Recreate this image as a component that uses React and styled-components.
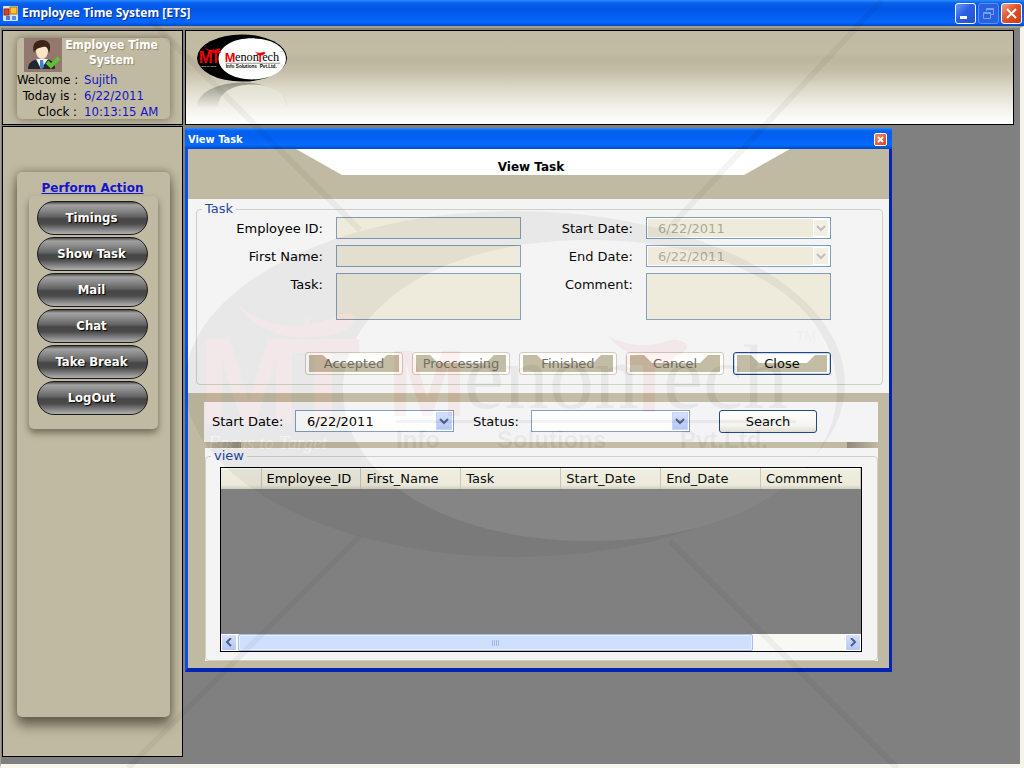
import styled, { createGlobalStyle, css } from "styled-components";

const GlobalStyle = createGlobalStyle`
  * {
    box-sizing: border-box;
  }
  body {
    margin: 0;
    font-family: "DejaVu Sans", Verdana, sans-serif;
    font-size: 13px;
    color: #000;
  }
  button, input, select, textarea {
    font-family: inherit;
    font-size: inherit;
  }
`;

const tan = "#c1baa2";
const condensed = `"DejaVu Sans Condensed", Tahoma, sans-serif`;

const Screen = styled.div`
  position: relative;
  min-height: 100vh;
  display: flex;
  flex-direction: column;
  overflow: hidden;
  background-color: #808080;
`;

/* main window title */

const TitleBar = styled.header`
  height: 26px;
  padding: 0 2px 0 3px;
  display: flex;
  align-items: center;
  gap: 4px;
  color: white;
  background: linear-gradient(#2a8cff 0, #0a62ee 3px, #0257e4 8px, #0560f4 18px, #0668fe 22px, #0148c8 100%);
`;

const AppTitle = styled.h1`
  flex: 1;
  margin: 0;
  font-family: "Noto Sans", sans-serif;
  font-size: 12px;
  font-weight: bold;
  line-height: 16px;
  text-shadow: 1px 1px #0a2f87;
`;

const WindowButtons = styled.div`
  display: flex;
  gap: 2px;
`;

const WindowButton = styled.button`
  width: 21px;
  height: 21px;
  padding: 0;
  display: flex;
  border: 1px solid ${(props) => (props.$dim ? "#5d8bf0" : "#fff")};
  border-radius: 3px;
  background: ${(props) =>
    props.$close
      ? "linear-gradient(135deg, #f3a087, #e0542c 45%, #c93b10)"
      : props.$dim
      ? "#2a61e2"
      : "linear-gradient(135deg, #6d97f6, #2a60e4 45%, #2350cf)"};
`;

const Client = styled.main`
  flex: 1;
  display: grid;
  grid-template-columns: 181px 1fr;
  gap: 2px;
  padding: 2px 0 7px 1px;
  border-style: solid;
  border-width: 2px 4px 4px 1px;
  border-color: #a79f86 #f6f4ea #f8f6ee #a79f86;
`;

const Column = styled.div`
  display: flex;
  flex-direction: column;
  gap: 1px;
`;

const Panel = styled.section`
  min-height: 95px;
  border: 1px solid #000;
  background-color: ${tan};
`;

const raised = css`
  border-radius: 5px;
  background-color: ${tan};
  box-shadow: 0 0 9px rgba(60, 55, 40, 0.6);
`;

/* user card */

const UserPanel = styled(Panel)`
  padding: 7px 12px 5px 14px;
`;

const UserCard = styled.div`
  ${raised}
  height: 81px;
`;

const UserTop = styled.div`
  display: flex;
  padding-left: 7px;
`;

const SystemName = styled.h2`
  flex: 1;
  margin: 0;
  padding-right: 9px;
  font-family: ${condensed};
  font-size: 12px;
  line-height: 15px;
  text-align: center;
  color: white;
  text-shadow: 1px 1px 1px #8d866e;
`;

const UserInfo = styled.dl`
  margin: 0;
  display: grid;
  grid-template-columns: 60px 1fr;
  column-gap: 7px;
  font-family: ${condensed};
  font-size: 13px;
  line-height: 16px;
  white-space: nowrap;
`;

const InfoLabel = styled.dt`
  text-align: right;
`;

const InfoValue = styled.dd`
  margin: 0;
  color: #1313c4;
`;

/* side menu */

const SidePanel = styled(Panel)`
  flex: 1;
  display: flex;
  padding: 45px 12px 39px 14px;
`;

const SideCard = styled.nav`
  ${raised}
  flex: 1;
  padding: 8px 12px;
  box-shadow: 0 0 9px rgba(60, 55, 40, 0.5), 0 9px 12px rgba(60, 55, 40, 0.6);
`;

const SideTitle = styled.a`
  display: block;
  padding-right: 2px;
  font-size: 12px;
  font-weight: bold;
  line-height: 16px;
  text-align: center;
  white-space: nowrap;
  color: #1414cc;
`;

const MenuBox = styled.div`
  ${raised}
  display: flex;
  flex-direction: column;
  gap: 2px;
  padding: 5px 10px 14px 8px;
  box-shadow: 0 4px 7px rgba(60, 55, 40, 0.6);
`;

const MenuButton = styled.button`
  height: 34px;
  padding: 0 2px 2px 0;
  border: 1px solid #1c1c1c;
  border-radius: 17px;
  font-family: ${condensed};
  font-size: 13px;
  font-weight: bold;
  color: white;
  text-shadow: 1px 1px 1px #000;
  background: linear-gradient(#4a4a4a 0, #a2a2a2 3px, #8a8a8a 8px, #606060 15px, #454545 17px, #4c4c4c 22px, #888 28px, #b0b0b0 100%);
`;

/* banner */

const Banner = styled(Panel)`
  height: 95px;
  margin-right: 6px;
  padding: 3px 11px;
  background: linear-gradient(${tan} 0, #c3bca5 22px, #bdb69d 27px, #c4bea8 40px, #dedaca 58px, #f3f2ec 78px, #fff 100%);
`;

const LogoStack = styled.div`
  width: 90px;
  display: flex;
  flex-direction: column;
`;

const Reflection = styled.div`
  height: 26px;
  overflow: hidden;
  opacity: 0.3;
  mask-image: linear-gradient(#000, transparent);

  svg {
    transform: scaleY(-1);
  }
`;

/* child window */

const ChildWindow = styled.section`
  width: 707px;
  max-width: 100%;
  margin-top: 2px;
  border-style: solid;
  border-width: 0 3px 4px;
  border-color: #0a50e6 #0424b4 #0424b4 #0a50e6;
  background-color: ${tan};
`;

const ChildTitle = styled.header`
  height: 21px;
  margin: 0 -3px;
  padding: 2px 5px 0 3px;
  display: flex;
  align-items: center;
  justify-content: space-between;
  font-family: ${condensed};
  font-size: 11px;
  font-weight: bold;
  color: white;
  background: linear-gradient(#2a8cff 0, #0560ec 3px, #0360f4 10px, #066cfe 17px, #0148c0 100%);
`;

const CloseButton = styled.button`
  width: 13px;
  height: 13px;
  padding: 0;
  display: flex;
  border: 1px solid #fff;
  border-radius: 2px;
  background: linear-gradient(135deg, #f08a6a, #d9431a);
`;

const FormBanner = styled.div`
  height: 50px;
  padding: 0 99px 0 108px;
`;

const FormTitle = styled.h2`
  height: 26px;
  margin: 0;
  padding: 10px 24px 0 0;
  font-size: 12px;
  line-height: 16px;
  text-align: center;
  background-color: #fff;
  clip-path: polygon(0 0, 100% 0, calc(100% - 46px) 100%, 46px 100%);
`;

const FormArea = styled.div`
  padding: 2px 6px 8px 8px;
  background-color: #f4f4f5;
`;

const Group = styled.fieldset`
  min-width: 0;
  margin: 0;
  padding: 0;
  border: 1px solid #d0d0c2;
  border-radius: 4px;
`;

const Legend = styled.legend`
  margin-left: 5px;
  padding: 0 3px;
  line-height: 16px;
  color: #2448a0;
`;

const Fields = styled.div`
  display: grid;
  grid-template-columns: 126px 185px 99px 185px;
  gap: 6px 13px;
`;

const FieldLabel = styled.label`
  height: 22px;
  line-height: 24px;
  text-align: right;
`;

const fieldBox = css`
  width: 100%;
  margin: 0;
  border: 1px solid #7f9db9;
  border-radius: 0;
  background-color: #efebdb;
`;

const TextInput = styled.input`
  ${fieldBox}
  height: 22px;
  padding: 0 3px;
`;

const TextArea = styled.textarea`
  ${fieldBox}
  display: block;
  height: 47px;
  padding: 3px;
  resize: none;
`;

const ComboBox = styled.div`
  position: relative;
  width: ${(props) => props.$width || "100%"};
`;

const Select = styled.select`
  ${fieldBox}
  display: block;
  height: 22px;
  padding: 0 20px 0 11px;
  appearance: none;
  outline: 0;
  color: #000;
  background-color: #fff;
  &:disabled {
    opacity: 1;
    color: #aca899;
    background-color: #efebdb;
    box-shadow: inset 0 0 0 1px #fff;
  }
`;

const ComboArrow = styled.span`
  position: absolute;
  top: 2px;
  right: 2px;
  width: 16px;
  height: 18px;
  display: flex;
  align-items: center;
  justify-content: center;
  pointer-events: none;
  border: 1px solid ${(props) => (props.$disabled ? "#fff" : "#c8d6fb")};
  color: ${(props) => (props.$disabled ? "#c3bfb4" : "#4d6185")};
  background: ${(props) => (props.$disabled ? "#f1efe6" : "linear-gradient(#d3e0fe, #b0c5f6)")};
`;

const Actions = styled.div`
  display: flex;
  justify-content: flex-end;
  gap: 9px;
  padding: 32px 51px 9px 0;
`;

const PlainButton = styled.button`
  width: 98px;
  height: 23px;
  padding: 0;
  border: 1px solid #1a4277;
  border-radius: 3px;
  color: #000;
  background: linear-gradient(#fff, #f5f4ef 70%, #dfdcd0);
`;

const TabButton = styled(PlainButton)`
  position: relative;
  z-index: 0;
  background: #fdfdfb;
  box-shadow: ${(props) => (props.disabled ? "none" : "inset 0 0 0 1px #c5d6f5")};
  &:disabled {
    color: #6c695f;
    border-color: #cfcbbc;
  }
  &::before,
  &::after {
    content: "";
    position: absolute;
    z-index: -1;
    left: 3px;
    right: 3px;
    top: 2px;
    height: 17px;
    background-color: ${tan};
  }
  &::after {
    height: 8px;
    background-color: #fff;
    clip-path: polygon(14px 0, calc(100% - 12px) 0, calc(100% - 20px) 100%, 22px 100%);
  }
`;

const SearchArea = styled.div`
  padding: 9px 11px 7px 16px;
`;

const SearchBar = styled.form`
  height: 40px;
  padding: 0 8px 2px;
  display: flex;
  align-items: center;
  background-color: #f4f4f6;
`;

const SearchLabel = styled.label`
  width: ${(props) => props.$width};
`;

const Spacer = styled.div`
  width: ${(props) => props.$width};
`;

const Divider = styled.div`
  height: 6px;
  display: flex;
  justify-content: space-between;

  &::before,
  &::after {
    content: "";
    width: 37px;
    background: linear-gradient(to right, ${tan}, #8f8a78);
  }
  &::after {
    width: 31px;
    background: linear-gradient(to left, ${tan}, #8f8a78);
  }
`;

const ViewArea = styled.div`
  margin-left: 1px;
  background-color: #f4f4f5;
`;

const DataGrid = styled.div`
  margin: 3px 15px 8px 14px;
  border: 1px solid #000;
  background-color: #808080;
`;

const Table = styled.table`
  width: 100%;
  table-layout: fixed;
  border-collapse: collapse;
`;

const HeadCell = styled.th`
  width: ${(props) => props.$width || "auto"};
  height: 21px;
  padding: 0 0 0 5px;
  font-weight: normal;
  text-align: left;
  white-space: nowrap;
  border-right: 1px solid #c9c5b2;
  background: linear-gradient(#fff 0, #efedde 2px, #ebeadb 17px, #d2cdbc 100%);
`;

const EmptyRows = styled.div`
  height: 145px;
`;

const ScrollBar = styled.div`
  height: 17px;
  display: flex;
  background-color: #f8f8f4;
`;

const ScrollButton = styled.button`
  width: 16px;
  padding: 0;
  display: flex;
  align-items: center;
  justify-content: center;
  border: 1px solid #fff;
  border-radius: 2px;
  color: #4d6185;
  background: linear-gradient(#d3e0fe, #b4c8f7);
`;

const Track = styled.div`
  flex: 1;
  padding: 0 1px;
`;

const Thumb = styled.div`
  width: 85%;
  height: 17px;
  display: flex;
  align-items: center;
  justify-content: center;
  border: 1px solid #a5bdea;
  border-radius: 2px;
  box-shadow: inset 0 0 0 1px #e6eeff;
  background-color: #cfe0fe;
`;

const Watermark = styled.svg`
  position: absolute;
  top: 0;
  left: 0;
  width: 1024px;
  height: 768px;
  pointer-events: none;
`;

const LogoSvg = styled.svg`
  display: block;
  width: 90px;
  height: 48px;
`;

const menu = ["Timings", "Show Task", "Mail", "Chat", "Take Break", "LogOut"];

const columns = ["Employee_ID", "First_Name", "Task", "Start_Date", "End_Date", "Commment"];

const Ovals = () => (
  <g>
    <ellipse cx="515" cy="384" rx="330" ry="173" fill="#000" />
    <path
      d="M343 390 C343 302 447 240 590 240 C733 240 837 302 837 390 C837 478 733 541 590 541 C447 541 343 478 343 390 Z"
      fill="#fff"
    />
  </g>
);

const LogoArt = ({ solid }) => (
  <g>
    <Ovals />
    <g fill="#f00000" fontFamily="Liberation Sans, sans-serif" fontWeight="bold">
      <text x="198" y="424" fontSize="122">M</text>
      <text x="286" y="424" fontSize="122">T</text>
      <text x="388" y="416" fontSize="94">M</text>
      <text x="624" y="412" fontSize="82">T</text>
    </g>
    <g fill="#f00000">
      <path d="M237 305 C262 324 282 327 304 325 Q306 312 311 324 C330 322 341 309 354 315 C361 322 346 333 325 336 L303 338 C278 337 253 326 237 305 Z" />
      <path d="M608 336 C630 347 645 346 661 343 C672 337 683 340 688 345 C686 355 674 357 662 358 L648 358 C630 355 617 348 608 336 Z" />
    </g>
    <g fill="#000" fontFamily="Liberation Serif, serif" fontSize="90">
      <text x="464" y="408">enon</text>
      <text x="663" y="408">ech</text>
    </g>
    <rect x="396" y="420" width="400" height="3" fill="#000" />
    <g fill="#000" fontFamily="Liberation Sans, sans-serif" fontWeight="bold" fontSize={solid ? 34 : 24}>
      <text x="396" y={solid ? 455 : 448}>Info</text>
      <text x={solid ? 470 : 497} y={solid ? 455 : 448}>Solutions</text>
      <text x={solid ? 645 : 680} y={solid ? 455 : 448}>Pvt.Ltd.</text>
    </g>
    <text x="208" y="449" fill="#fff" fontFamily="Liberation Serif, serif" fontStyle="italic" fontSize="19">Focus to Target</text>
    <text x="796" y="341" fill="#777" fontFamily="Liberation Sans, sans-serif" fontSize="14">TM</text>
  </g>
);

const AppIcon = () => (
  <svg width="15" height="15" viewBox="0 0 15 15">
    <rect width="15" height="15" rx="1" fill="#d9e4f5" />
    <rect x="1" y="3" width="5" height="6" fill="#d8432b" stroke="#8d2415" />
    <rect x="7" y="1" width="7" height="7" fill="#f7c433" stroke="#a87411" />
    <rect x="3" y="10" width="4" height="4" fill="#4c7ad0" />
    <rect x="9" y="10" width="4" height="4" fill="#5c8ee0" />
  </svg>
);

const AvatarSvg = styled.svg`
  display: block;
`;

const Avatar = () => (
  <AvatarSvg width="38" height="34" viewBox="0 0 38 34">
    <rect width="38" height="34" fill="#93786f" />
    <path d="M4 31 C4 25 8 22 14 21 L22 21 C28 22 31 25 31 31 Z" fill="#1f2735" />
    <path d="M12 21 L17 31 L24 21 Z" fill="#f2f6fa" />
    <path d="M16 22 H19 L20 29 L18 31 L16 29 Z" fill="#3a86c9" />
    <ellipse cx="18" cy="13" rx="6" ry="8" fill="#fbe3c8" />
    <path d="M10 15 C7 5 13 2 18 2 C25 2 28 7 25 15 C24 11 23 8 19 9 C15 10 12 10 10 15 Z" fill="#3b2418" />
    <path d="M23 24 L27 28 L35 20" fill="none" stroke="#62c02c" strokeWidth="4" />
  </AvatarSvg>
);

const Chevron = ({ d = "M1 2 L5 6 L9 2" }) => (
  <svg width="10" height="9" viewBox="0 0 10 9">
    <path d={d} fill="none" stroke="currentColor" strokeWidth="2" />
  </svg>
);

const Combo = ({ id, value, disabled, width }) => (
  <ComboBox $width={width}>
    <Select id={id} disabled={disabled} defaultValue={value}>
      <option value={value}>{value}</option>
    </Select>
    <ComboArrow $disabled={disabled}>
      <Chevron />
    </ComboArrow>
  </ComboBox>
);

const Sidebar = () => (
  <Column>
    <UserPanel>
      <UserCard>
        <UserTop>
          <Avatar />
          <SystemName>Employee Time System</SystemName>
        </UserTop>
        <UserInfo>
          <InfoLabel>Welcome :</InfoLabel>
          <InfoValue>Sujith</InfoValue>
          <InfoLabel>Today is :</InfoLabel>
          <InfoValue>6/22/2011</InfoValue>
          <InfoLabel>Clock :</InfoLabel>
          <InfoValue>10:13:15 AM</InfoValue>
        </UserInfo>
      </UserCard>
    </UserPanel>
    <SidePanel>
      <SideCard>
        <SideTitle href="#actions">Perform Action</SideTitle>
        <MenuBox id="actions">
          {menu.map((item) => (
            <MenuButton key={item} type="button">{item}</MenuButton>
          ))}
        </MenuBox>
      </SideCard>
    </SidePanel>
  </Column>
);

const TaskForm = () => (
  <FormArea>
    <Group>
      <Legend>Task</Legend>
      <Fields>
        <FieldLabel htmlFor="employeeId">Employee ID:</FieldLabel>
        <TextInput id="employeeId" disabled />
        <FieldLabel htmlFor="startDate">Start Date:</FieldLabel>
        <Combo id="startDate" value="6/22/2011" disabled />
        <FieldLabel htmlFor="firstName">First Name:</FieldLabel>
        <TextInput id="firstName" disabled />
        <FieldLabel htmlFor="endDate">End Date:</FieldLabel>
        <Combo id="endDate" value="6/22/2011" disabled />
        <FieldLabel htmlFor="task">Task:</FieldLabel>
        <TextArea id="task" disabled />
        <FieldLabel htmlFor="comment">Comment:</FieldLabel>
        <TextArea id="comment" disabled />
      </Fields>
      <Actions>
        <TabButton type="button" disabled>Accepted</TabButton>
        <TabButton type="button" disabled>Proccessing</TabButton>
        <TabButton type="button" disabled>Finished</TabButton>
        <TabButton type="button" disabled>Cancel</TabButton>
        <TabButton type="button">Close</TabButton>
      </Actions>
    </Group>
  </FormArea>
);

const TaskView = () => (
  <SearchArea>
    <SearchBar onSubmit={(e) => e.preventDefault()}>
      <SearchLabel htmlFor="searchDate" $width="83px">Start Date:</SearchLabel>
      <Combo id="searchDate" value="6/22/2011" width="159px" />
      <Spacer $width="19px" />
      <SearchLabel htmlFor="status" $width="58px">Status:</SearchLabel>
      <Combo id="status" value="" width="159px" />
      <Spacer $width="29px" />
      <PlainButton type="submit">Search</PlainButton>
    </SearchBar>
    <Divider />
    <ViewArea>
      <Group>
        <Legend>view</Legend>
        <DataGrid>
          <Table>
            <thead>
              <tr>
                <HeadCell $width="40px" />
                {columns.map((name) => (
                  <HeadCell key={name} scope="col">{name}</HeadCell>
                ))}
              </tr>
            </thead>
          </Table>
          <EmptyRows />
          <ScrollBar>
            <ScrollButton type="button" aria-label="Scroll left">
              <Chevron d="M7 0 L3 4 L7 8" />
            </ScrollButton>
            <Track>
              <Thumb>
                <svg width="8" height="6" viewBox="0 0 8 6" shapeRendering="crispEdges">
                  <path d="M0.5 0V6M2.5 0V6M4.5 0V6M6.5 0V6" stroke="#9db8ec" strokeWidth="1" />
                </svg>
              </Thumb>
            </Track>
            <ScrollButton type="button" aria-label="Scroll right">
              <Chevron d="M3 0 L7 4 L3 8" />
            </ScrollButton>
          </ScrollBar>
        </DataGrid>
      </Group>
    </ViewArea>
  </SearchArea>
);

const App = () => {
  return (
    <Screen>
      <GlobalStyle />
      <TitleBar>
        <AppIcon />
        <AppTitle>Employee Time System [ETS]</AppTitle>
        <WindowButtons>
          <WindowButton type="button" aria-label="Minimize">
            <svg width="19" height="19"><rect x="4" y="12" width="7" height="3" fill="#fff" /></svg>
          </WindowButton>
          <WindowButton type="button" aria-label="Restore" $dim>
            <svg width="19" height="19" fill="none" stroke="#7da2f5">
              <path d="M7.5 7V4.5H14.5V10.5H12M7 5.5H15" />
              <path d="M4.5 8.5H11.5V14.5H4.5ZM4 9.5H12" />
            </svg>
          </WindowButton>
          <WindowButton type="button" aria-label="Close" $close>
            <svg width="19" height="19"><path d="M5 5L14 14M14 5L5 14" stroke="#fff" strokeWidth="2" /></svg>
          </WindowButton>
        </WindowButtons>
      </TitleBar>
      <Client>
        <Sidebar />
        <Column>
          <Banner>
            <LogoStack>
              <LogoSvg viewBox="185 208 660 352" aria-label="MenonTech">
                <LogoArt solid />
              </LogoSvg>
              <Reflection>
                <LogoSvg viewBox="185 208 660 352" aria-hidden="true">
                  <Ovals />
                </LogoSvg>
              </Reflection>
            </LogoStack>
          </Banner>
          <ChildWindow>
            <ChildTitle>
              <span>View Task</span>
              <CloseButton type="button" aria-label="Close View Task">
                <svg width="11" height="11"><path d="M3 3L8 8M8 3L3 8" stroke="#fff" strokeWidth="2" /></svg>
              </CloseButton>
            </ChildTitle>
            <FormBanner>
              <FormTitle>View Task</FormTitle>
            </FormBanner>
            <TaskForm />
            <TaskView />
          </ChildWindow>
        </Column>
      </Client>
      <Watermark viewBox="0 0 1024 768" aria-hidden="true">
        <path
          d="M150 20L360 230M882 0L672 225M360 536L128 768M670 541L897 768"
          stroke="#000"
          strokeWidth="6"
          opacity="0.04"
        />
        <g opacity="0.045">
          <LogoArt />
        </g>
      </Watermark>
    </Screen>
  );
};

export default App;
